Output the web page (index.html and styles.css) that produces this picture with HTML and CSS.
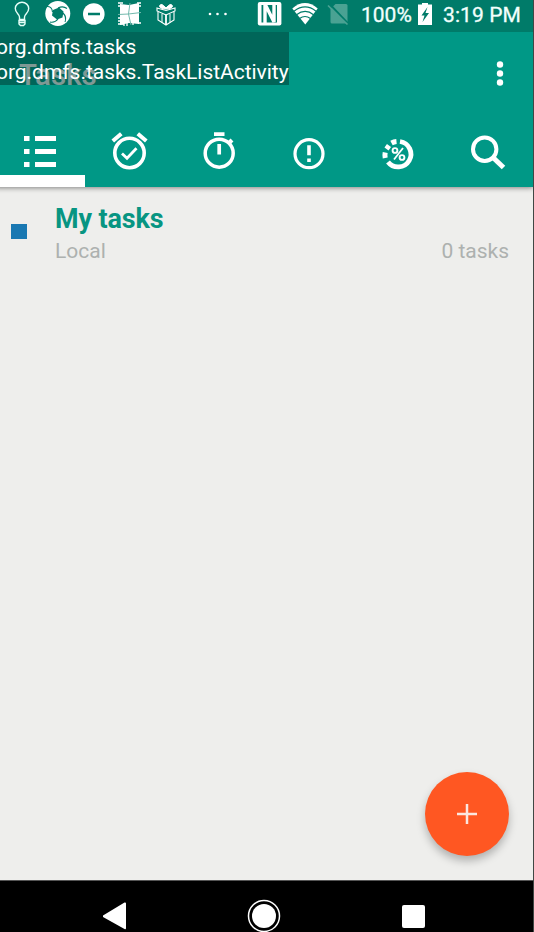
FILE: index.html
```
<!DOCTYPE html>
<html lang="en">
<head>
<meta charset="utf-8">
<title>Tasks</title>
<link rel="stylesheet" href="styles.css">
</head>
<body>
<div class="screen">
  <div class="status">
    <svg class="cell" viewBox="0 0 36 32" fill="none" stroke="#e5fff8" stroke-width="1.4"><path d="M15.500 19.500v-2.500c0-3-4.200-4-4.200-8.500a6.700 6.200 0 0 1 13.400 0c0 4.500-4.200 5.500-4.200 8.500v2.500z"/><path d="M15 20.500h6v3.500l-1.500 1.500h-3L15 24zM15 22.500h6"/></svg>
    <svg class="cell" viewBox="0 0 36 32"><circle cx="17.800" cy="13.500" r="12.500" fill="#fff"/><path d="m13 10 6-2.500 4.500 4-1 6-5.500 2-5-4z" fill="#007b69"/><path d="M12.500 12Q12 6 6.500 6.500M18 8q5-2.500 9 .5M23 13q4 4 2 9M18 19q-3 4-8 3" fill="none" stroke="#007b69" stroke-width="1.100"/></svg>
    <svg class="cell" viewBox="0 0 36 32"><circle cx="17.800" cy="14" r="10.800" fill="#fff"/><path d="M12 14h12" stroke="#007b69" stroke-width="2.500"/></svg>
    <svg class="cell" viewBox="0 0 36 32"><path d="M8 4 17 5l10-2v21l-10-1-9 2z" fill="#fff"/><path d="M6 14.500 16.500 14 29 12.500M18 3l-1.500 11L19 25" fill="none" stroke="#72b9ad" stroke-width="1"/><path d="M6 3h5M6 6h4M6 18h4M6 21h4M6 24h6M25 3h4M26 6h3M26 23h3M12 24v2M15 23v3M21 23v2" stroke="#fff" stroke-width="1.300"/></svg>
    <svg class="cell" viewBox="0 0 36 32" fill="none" stroke="#fff"><path d="M10 11.500v8.500l8 5 8-5v-8.500" stroke-width="1.100"/><path d="m9 8 9 2.500L27 8v3l-9 4-9-4z" stroke-width="1.100"/><path d="M14 14v8.500M22 14v8.500" stroke-width="1"/><path d="M18 14.500V25" stroke-width="1.800"/><path d="M18 9q-6 0-6.500-3 1.500-4 6.500 2 5-6 6.500-2-.5 3-6.500 3z" fill="#fff"/></svg>
    <svg class="cell dots" viewBox="0 0 66 32" fill="#fff"><circle cx="26" cy="14" r="1.300"/><circle cx="33.500" cy="14" r="1.300"/><circle cx="41.500" cy="14" r="1.300"/></svg>
    <svg class="cell" viewBox="0 0 36 32"><rect x="6.800" y="2" width="23.600" height="23.500" rx="2" fill="#fff"/><path d="M10.500 5h15.500v17.500H10.500z" fill="#007b69"/><path d="M14 24V4l9 18V3" fill="none" stroke="#fff" stroke-width="3.400"/></svg>
    <svg class="cell" viewBox="0 0 36 32"><path d="M5.300 8.500q12.700-10.800 25.400 0L18.300 24.500z" fill="#fff"/><path d="M7 11.200q11.200-8.500 22 0M9.500 14.700q8.800-6.500 17 0M12.500 18.500q5.500-4 11 0" fill="none" stroke="#007b69" stroke-width="1.200"/></svg>
    <svg class="cell" viewBox="0 0 36 32"><path d="m7.500 9 5-5H23q1.500 0 1.500 1.500V22q0 1.500-1.500 1.500H9Q7.500 23.500 7.500 22z" fill="#4aa293"/><path d="m6.500 4 19 20" stroke="#007b69" stroke-width="2"/><path d="m5 5.500 19.500 19" stroke="#4aa293" stroke-width="1.700"/></svg>
    <span class="battery-level">100%</span>
    <svg class="battery" viewBox="0 0 14 32"><path d="M0 4.500h4V3h6v1.500h4V25H0z" fill="#fff"/><path d="M9.500 7 3.500 15.500h3L4.500 22l6.500-9H7.500z" fill="#007b69"/></svg>
    <span class="clock">3:19 PM</span>
  </div>
  <header class="appbar">
    <h1>Tasks</h1>
    <svg class="more" viewBox="0 0 10 30" fill="#fff"><circle cx="5" cy="5.500" r="3.200"/><circle cx="5" cy="14.500" r="3.200"/><circle cx="5" cy="23.500" r="3.200"/></svg>
    <div class="activity"><div class="package">org.dmfs.tasks</div><div class="name">org.dmfs.tasks.TaskListActivity</div></div>
  </header>
  <nav class="tabs">
    <div class="tab active"><svg viewBox="0 0 48 48" fill="#fff"><path d="M8 12h5.500v5H8zM19 12h21v5H19zM8 25h5.500v5H8zM19 25h21v5H19zM8 38h5.500v5H8zM19 38h21v5H19z"/></svg></div>
    <div class="tab"><svg viewBox="0 0 48 48" fill="none" stroke="#fff"><circle cx="24.500" cy="29" r="14.700" stroke-width="3.600"/><path d="m7.800 17 8.500-7.200M32.800 9.800l8.500 7.200" stroke-width="4"/><path d="m17 29.500 5 4.800 9.500-10" stroke-width="2.800"/></svg></div>
    <div class="tab"><svg viewBox="0 0 48 48" fill="none" stroke="#fff"><circle cx="24.200" cy="29.200" r="14" stroke-width="3.500"/><path d="M19 10.200h10.500M24.200 20v10.500" stroke-width="3.700"/><path d="m34 19 3-3" stroke-width="4"/></svg></div>
    <div class="tab"><svg viewBox="0 0 48 48" fill="none" stroke="#fff"><circle cx="24" cy="29.700" r="14" stroke-width="3.200"/><path d="M24 21.300v10M24 34.500v3.500" stroke-width="3.600"/></svg></div>
    <div class="tab"><svg viewBox="0 0 48 48" fill="none" stroke="#fff"><path d="M26 17.500A12.800 12.800 0 1 1 14 38" stroke-width="4.800"/><path d="M17.500 19a13 13 0 0 1 5-1.500M12.500 25l2.500-3.500M11.200 34a13 13 0 0 1 0-5.500" stroke-width="5"/><circle cx="21" cy="26.500" r="2.400" stroke-width="1.900"/><circle cx="28" cy="33.500" r="2.400" stroke-width="1.900"/><path d="m20 35.500 9-11.500" stroke-width="1.800"/></svg></div>
    <div class="tab"><svg viewBox="0 0 48 48" fill="none" stroke="#fff"><circle cx="20.700" cy="25.200" r="11.700" stroke-width="4"/><path d="m29 33.500 10.500 10" stroke-width="5"/></svg></div>
  </nav>
  <main>
    <div class="list-item">
      <span class="swatch"></span>
      <div class="info"><h2>My tasks</h2><div class="meta"><span>Local</span><span class="count">0 tasks</span></div></div>
    </div>
    <button class="fab" aria-label="Add task"><svg viewBox="0 0 20 20"><path d="M10 0v20M0 10h20" stroke="#fbe6df" stroke-width="2.500"/></svg></button>
  </main>
  <footer>
    <svg class="back" viewBox="0 0 26 30"><path d="M1 15.500 22.500 2.500q1.500-.5 1.500 1V28q0 2-1.500 1L1 17z" fill="#fff"/></svg>
    <svg class="home" viewBox="0 0 34 34"><circle cx="17" cy="17" r="15.500" fill="none" stroke="#fff" stroke-width="1.500"/><circle cx="17" cy="17" r="12" fill="#fff"/></svg>
    <span class="recent"></span>
  </footer>
</div>
</body>
</html>
```
FILE: styles.css
```
* { box-sizing: border-box; }
body { margin: 0; font-family: Roboto, sans-serif; background: #eeeeec; }
.screen { width: 534px; height: 932px; overflow: hidden; display: flex; flex-direction: column; border-right: 1px solid #404744; }
.status { flex: none; height: 32px; display: flex; padding-left: 4px; background: #007b69; color: #f2fffc; font-size: 21px; line-height: 30px; white-space: nowrap; -webkit-text-stroke: .3px #f2fffc; }
.cell { flex: none; width: 36px; height: 32px; }
.dots { width: 66px; margin-right: 1px; }
.battery-level { width: 57px; padding-left: 2px; }
.battery { flex: none; width: 14px; height: 32px; margin-left: 2px; }
.clock { margin-left: 11px; letter-spacing: .1px; }
.appbar { position: relative; flex: none; height: 88px; display: flex; justify-content: space-between; padding: 0 28px 0 19px; background: #009886; }
h1 { margin: 25px 0 0; font-size: 29.5px; line-height: 36px; font-weight: 500; color: #fff; }
.more { width: 10px; height: 30px; margin-top: 27px; }
.activity { position: absolute; left: 0; top: 0; width: 289px; height: 53px; padding-top: 3px; background: rgba(0, 52, 44, .5); color: #fff; font-size: 21px; line-height: 25px; white-space: nowrap; overflow: hidden; }
.activity div { margin-left: -4px; letter-spacing: -.03px; }
.tabs { flex: none; height: 67px; display: grid; grid-template-columns: repeat(6, 89.6px); margin-left: -5px; background: #009886; box-shadow: 0 1px 5px rgba(0, 0, 0, .45); }
.tab { display: flex; justify-content: center; height: 67px; }
.tab svg { width: 48px; height: 48px; margin-top: 4px; }
.active { border-bottom: 12px solid #fff; }
main { flex: none; height: 693px; display: flex; flex-direction: column; justify-content: space-between; }
.list-item { display: flex; padding: 15px 24px 0 11px; }
.swatch { width: 16px; height: 15px; margin: 22px 28px 0 0; background: #1978b2; }
.info { flex: 1; }
h2 { margin: 0; font-size: 26.9px; line-height: 34px; font-weight: 700; letter-spacing: -.1px; color: #079582; }
.meta { display: flex; justify-content: space-between; font-size: 21px; line-height: 30px; color: #adb1af; }
.fab { align-self: flex-end; width: 84px; height: 84px; margin: 0 24px 24px 0; padding: 0; border: 0; border-radius: 50%; background: #ff5722; display: grid; place-items: center; box-shadow: 0 5px 9px rgba(0, 0, 0, .26); }
.fab svg { width: 20px; height: 20px; }
footer { flex: none; height: 52px; display: flex; background: #000; border-top: 1px solid #555; }
.back { width: 26px; height: 30px; margin: 19px 0 0 102px; }
.home { width: 34px; height: 34px; margin: 18px 0 0 119px; }
.recent { width: 23px; height: 23px; margin: 24px 0 0 121px; border-radius: 2px; background: #fff; }
```
